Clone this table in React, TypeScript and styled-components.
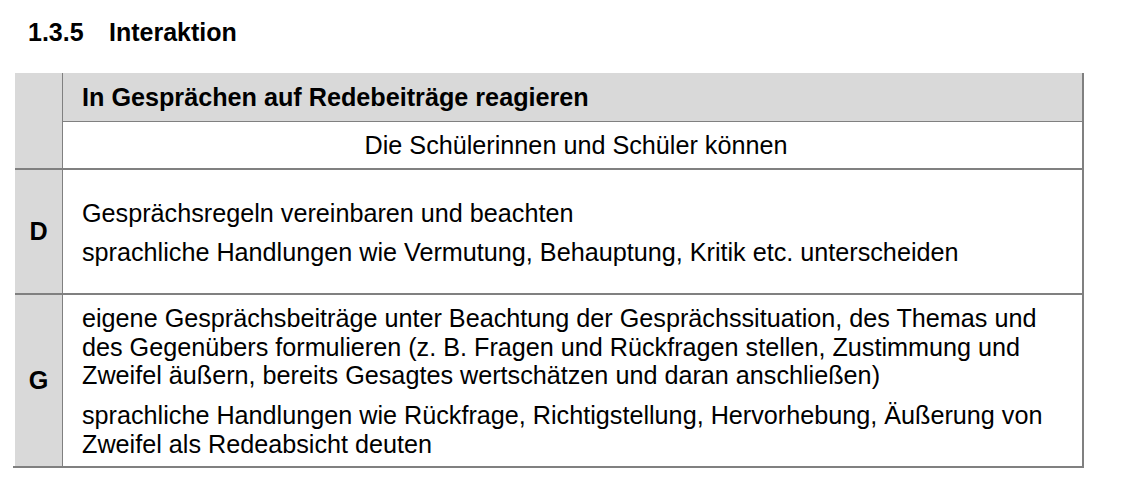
import React from "react";
import styled, { createGlobalStyle } from "styled-components";

const GlobalStyle = createGlobalStyle`
  html, body {
    margin: 0;
    padding: 0;
    background: #ffffff;
  }

  body {
    font-family: "Liberation Sans", Arial, sans-serif;
    color: #000000;
  }
`;

interface Row {
  level: string;
  items: string[];
  padding: string;
  gap: number;
}

const rows: Row[] = [
  {
    level: "D",
    padding: "29px 19px 27px",
    gap: 10,
    items: [
      "Gesprächsregeln vereinbaren und beachten",
      "sprachliche Handlungen wie Vermutung, Behauptung, Kritik etc. unterscheiden",
    ],
  },
  {
    level: "G",
    padding: "9px 19px 8px",
    gap: 11.5,
    items: [
      "eigene Gesprächsbeiträge unter Beachtung der Gesprächssituation, des Themas und des Gegenübers formulieren (z. B. Fragen und Rückfragen stellen, Zustimmung und Zweifel äußern, bereits Gesagtes wertschätzen und daran anschließen)",
      "sprachliche Handlungen wie Rückfrage, Richtigstellung, Hervorhebung, Äußerung von Zweifel als Redeabsicht deuten",
    ],
  },
];

function App() {
  return (
    <Page>
      <GlobalStyle />
      <Heading>
        <HeadingNumber>1.3.5</HeadingNumber>
        <span>Interaktion</span>
      </Heading>

      <Table>
        <Section>
          <SideCell />
          <MainColumn>
            <HeaderCell>In Gesprächen auf Redebeiträge reagieren</HeaderCell>
            <SubHeaderCell>Die Schülerinnen und Schüler können</SubHeaderCell>
          </MainColumn>
        </Section>

        {rows.map((row, i) => (
          <Section key={row.level} $last={i === rows.length - 1}>
            <SideCell>{row.level}</SideCell>
            <BodyCell $padding={row.padding} $gap={row.gap}>
              {row.items.map((item) => (
                <Item key={item}>{item}</Item>
              ))}
            </BodyCell>
          </Section>
        ))}
      </Table>
    </Page>
  );
}

const Page = styled.div`
  padding: 18px 0 0 0;
`;

const Heading = styled.h2`
  display: flex;
  margin: 0 0 26px 28px;
  font-size: 25px;
  font-weight: 700;
  line-height: 29px;
`;

const HeadingNumber = styled.span`
  width: 81px;
  flex-shrink: 0;
`;

const Table = styled.div`
  box-sizing: border-box;
  width: 1071px;
  margin-left: 13px;
  padding-left: 2px;
  border-right: 2px solid #808080;
  border-bottom: 2px solid #808080;
  font-size: 25.2px;
  line-height: 28.5px;
`;

const Section = styled.div<{ $last?: boolean }>`
  display: grid;
  grid-template-columns: 48px 1fr;
  border-bottom: ${(p) => (p.$last ? "none" : "2px solid #808080")};
`;

const SideCell = styled.div`
  box-sizing: border-box;
  display: flex;
  align-items: center;
  justify-content: center;
  background: #d9d9d9;
  border-right: 1px solid #808080;
  font-weight: 700;
`;

const MainColumn = styled.div`
  display: flex;
  flex-direction: column;
`;

const HeaderCell = styled.div`
  height: 48px;
  display: flex;
  align-items: center;
  padding: 0 19px;
  background: #d9d9d9;
  border-bottom: 1px solid #808080;
  font-weight: 700;
`;

const SubHeaderCell = styled.div`
  height: 46px;
  display: flex;
  align-items: center;
  justify-content: center;
  padding: 0 12px 0 19px;
`;

const BodyCell = styled.div<{ $padding: string; $gap: number }>`
  display: flex;
  flex-direction: column;
  justify-content: center;
  gap: ${(p) => p.$gap}px;
  padding: ${(p) => p.$padding};
`;

const Item = styled.p`
  margin: 0;
`;

export default App;
